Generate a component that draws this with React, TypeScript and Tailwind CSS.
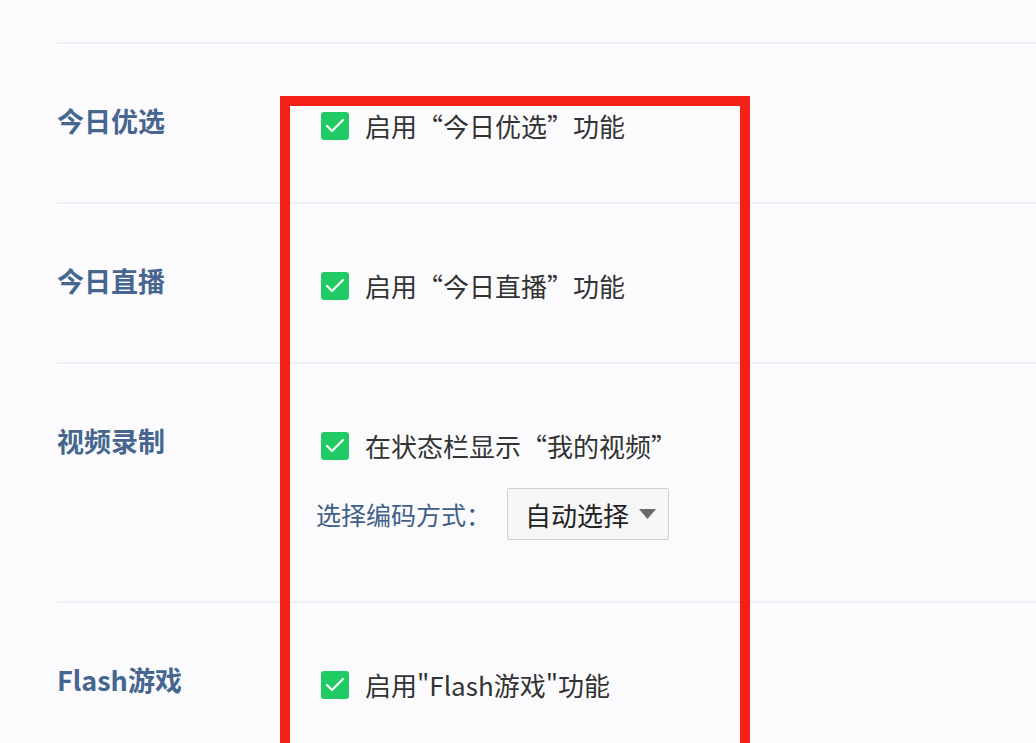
import { Check } from "lucide-react";

const font = { fontFamily: '"Noto Sans CJK SC", "Noto Sans", sans-serif' };

function GreenCheck({ label }: { label: string }) {
  return (
    <label className="flex items-center h-8 gap-4 pl-[5px] text-[26px] text-[#333] leading-8">
      <span className="w-7 h-7 rounded-[3px] bg-[#20cb64] flex items-center justify-center shrink-0">
        <Check className="w-6 h-6 text-white" strokeWidth={2.25} />
      </span>
      <span>{label}</span>
    </label>
  );
}

function SettingRow({ title, children, tall }: { title: string; children: React.ReactNode; tall?: boolean }) {
  return (
    <div className={`flex border-t-2 border-[#eeeff3] ${tall ? "pb-[61px]" : "h-[160px]"}`}>
      <div className="w-[259px] shrink-0 pt-[61px] text-[27px] leading-8 font-bold text-[#46658f]">{title}</div>
      <div className="pt-[66px] flex flex-col">{children}</div>
    </div>
  );
}

export default function App() {
  return (
    <div lang="zh-CN" className="relative w-[1036px] h-[743px] overflow-hidden bg-[#fbfbfd]" style={font}>
      <div className="h-[42px]" />
      <div className="pl-[57px]">
        <SettingRow title="今日优选">
          <GreenCheck label="启用“今日优选”功能" />
        </SettingRow>
        <SettingRow title="今日直播">
          <GreenCheck label="启用“今日直播”功能" />
        </SettingRow>
        <SettingRow title="视频录制" tall>
          <GreenCheck label="在状态栏显示“我的视频”" />
          <div className="flex items-center mt-[26px]">
            <span className="text-[25px] leading-8 text-[#3f5f88] w-[191px]">选择编码方式：</span>
            <button className="flex items-center justify-between w-[162px] h-[52px] pl-[17px] pr-3 border border-[#cfd0d3] rounded-[2px] bg-[#f6f6f7] text-[26px] text-[#222]">
              <span>自动选择</span>
              <svg width="17" height="10" viewBox="0 0 17 10">
                <path d="M0 0 L17 0 L8.5 10 Z" fill="#6a6a6a" />
              </svg>
            </button>
          </div>
        </SettingRow>
        <SettingRow title="Flash游戏">
          <GreenCheck label={'启用"Flash游戏"功能'} />
        </SettingRow>
      </div>
      {/* annotation box */}
      <div className="absolute left-[280px] top-[96px] w-[470px] h-[700px] border-[10px] border-[#f5201a]" />
    </div>
  );
}
